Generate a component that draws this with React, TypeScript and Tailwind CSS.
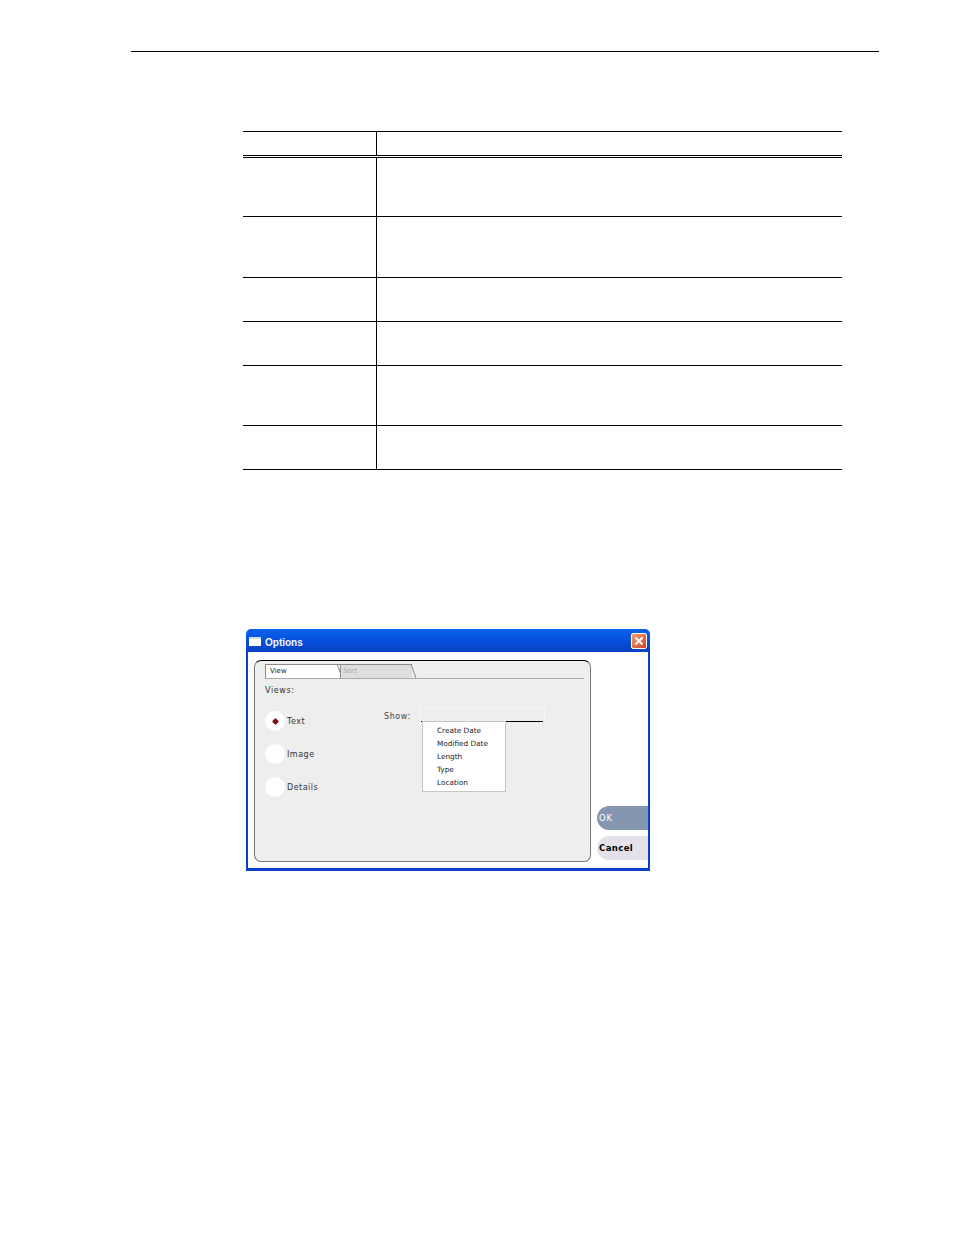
const rows = [58, 60, 43, 43, 59, 43];
const items = ["Create Date", "Modified Date", "Length", "Type", "Location"];
const views = ["Text", "Image", "Details"];

export default function App() {
  return (
    <div className="w-[954px] h-[1235px] bg-white overflow-hidden font-['DejaVu_Sans',sans-serif] pt-[51px]">
      <div className="ml-[131px] w-[748px] h-px bg-black" />
      <div className="ml-[243px] w-[599px] mt-[79px] border-t border-black">
        <div className="flex h-[26px] border-b-[3px] border-double border-black">
          <div className="w-[134px] border-r border-black" />
        </div>
        {rows.map((h, i) => (
          <div key={i} className="flex border-b border-black" style={{ height: h + 1 }}>
            <div className="w-[134px] border-r border-black" />
          </div>
        ))}
      </div>

      <div className="ml-[246px] mt-[159px] w-[404px] h-[242px] flex flex-col">
        <div className="h-[23px] shrink-0 rounded-t-[5px] bg-gradient-to-b from-[#0a62ea] via-[#0450dc] to-[#0a3fc0] flex items-center pl-[3px] pr-[3px]">
          <div className="w-[12px] h-[9px] mt-[1px] bg-white border-t-2 border-[#cfe0fa]" />
          <span className="ml-[4px] mt-[3px] text-[10px] font-bold text-[#f2f6ff] font-['Liberation_Sans',sans-serif]">Options</span>
          <div className="ml-auto w-[16px] h-[16px] rounded-[2px] border border-white bg-gradient-to-br from-[#ee9a78] to-[#d4401c] flex items-center justify-center">
            <svg width="10" height="10" viewBox="0 0 10 10">
              <path d="M1.5 1.5 L8.5 8.5 M8.5 1.5 L1.5 8.5" stroke="#fff" strokeWidth="2" />
            </svg>
          </div>
        </div>
        <div className="flex-1 bg-white border-x-[2px] border-b-[3px] border-x-[#0a3fc8] border-b-[#0a3fc8] pl-[6px] pt-[8px] flex">
          <div className="w-[337px] h-[202px] rounded-[7px] bg-[#eeeeee] border border-[#777777] border-t-black flex flex-col px-[6px]">
            <div className="mt-[3px] ml-[4px] mr-0 h-[15px] border-b border-[#aaaaaa] flex items-end">
              <div className="relative w-[75px] h-[14px] bg-white border-l border-t border-[#8a8a8a] text-[7px] leading-[12px] pl-[4px] text-[#222222]">
                View
                <svg className="absolute right-[-3px] top-[-1px]" width="6" height="15" viewBox="0 0 6 15">
                  <path d="M0 0 L5 13" stroke="#8a8a8a" fill="none" />
                </svg>
              </div>
              <div className="relative w-[72px] h-[14px] bg-[#e0dde0] border-l border-t border-[#8a8a8a] text-[7px] leading-[12px] pl-[2px] text-[#aaaaaa]">
                Sort
                <svg className="absolute right-[-5px] top-[-1px]" width="6" height="15" viewBox="0 0 6 15">
                  <path d="M0 0 L5 14" stroke="#8a8a8a" fill="none" />
                </svg>
              </div>
            </div>
            <div className="flex">
              <div className="w-[122px] pl-[4px]">
                <div className="mt-[6px] h-[12px] text-[8px] leading-[12px] tracking-[0.6px] text-[#333333]">Views:</div>
                <div className="mt-[14px] flex flex-col gap-[13px]">
                  {views.map((v, i) => (
                    <div key={v} className="flex items-center h-[20px]">
                      <div className="w-[20px] h-[20px] rounded-full bg-white flex items-center justify-center">
                        {i === 0 && <div className="w-[5px] h-[5px] rotate-45 rounded-[1px] bg-[#7a0a14]" />}
                      </div>
                      <span className="ml-[2px] mt-[1px] text-[8px] tracking-[0.5px] text-[#333333]">{v}</span>
                    </div>
                  ))}
                </div>
              </div>
              <div className="relative flex-1">
                <div className="absolute left-[1px] top-[32px] text-[8px] leading-[12px] tracking-[0.6px] text-[#444444]">Show:</div>
                <div className="absolute left-[37px] top-[28px] w-[125px] h-[15px] border border-dotted border-white border-b-0" />
                <div className="absolute left-[38px] top-[42px] w-[122px] h-px bg-black" />
                <div className="absolute left-[39px] top-[42px] w-[84px] h-[71px] bg-white border border-[#c4c8c0] pl-[14px] pt-[2px] text-[#222222]">
                  {items.map((t) => (
                    <div key={t} className="h-[13px] text-[7.3px] leading-[13px] whitespace-nowrap">{t}</div>
                  ))}
                </div>
              </div>
            </div>
          </div>
          <div className="ml-[6px] flex-1 flex flex-col pt-[146px] gap-[6px]">
            <div className="h-[24px] rounded-l-full bg-[#8496b0] text-white text-[8.5px] leading-[24px] pl-[2px] tracking-[0.8px]">OK</div>
            <div className="h-[24px] rounded-l-full bg-[#e4e2e8] text-black text-[8.5px] font-bold leading-[24px] pl-[2px] tracking-[0.4px]">Cancel</div>
          </div>
        </div>
      </div>
    </div>
  );
}
